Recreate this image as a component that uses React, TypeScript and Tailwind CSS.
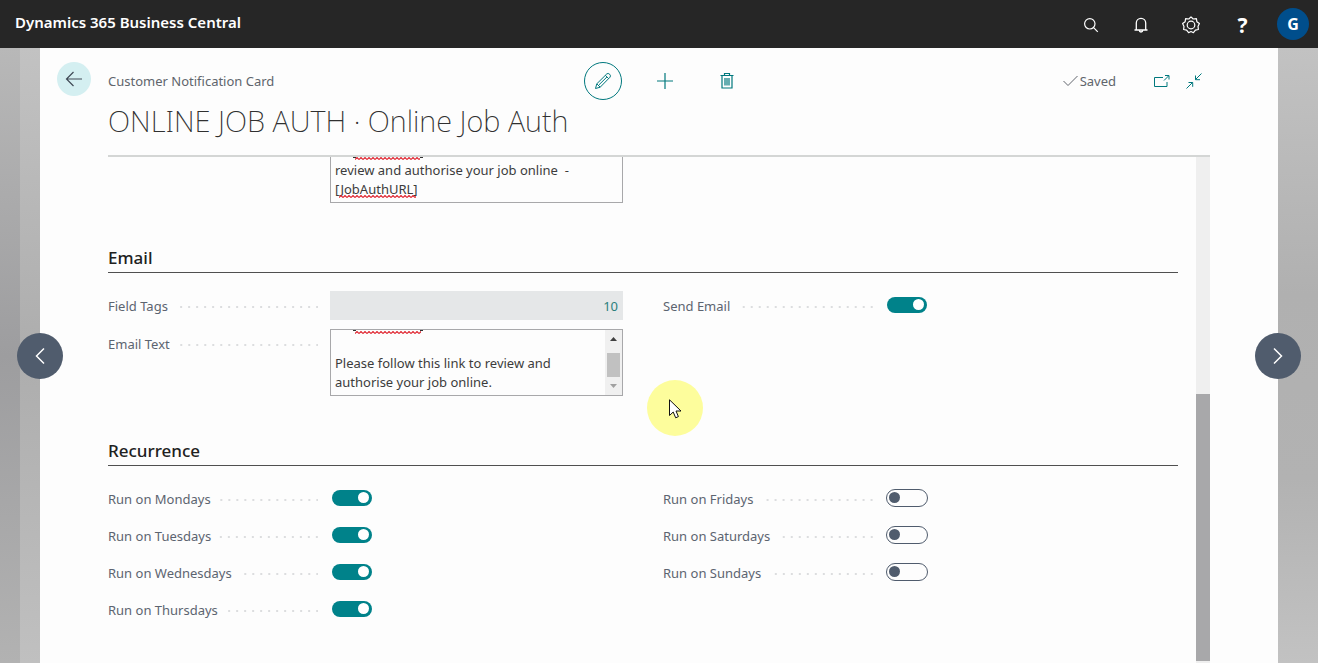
import { useId, type ReactNode } from "react";

function Toggle({ id, on }: { id: string; on: boolean }) {
  return (
    <input
      id={id}
      type="checkbox"
      role="switch"
      defaultChecked={on}
      className="mb-[2px] ml-px flex h-[18px] w-[42px] appearance-none items-center rounded-full border border-[#505c6d] bg-[#fdfdfd] bg-clip-padding px-[2px] before:block before:size-[11px] before:rounded-full before:bg-[#505c6d] checked:justify-end checked:border-transparent checked:bg-[#00828a] checked:px-[3px] checked:before:bg-white"
    />
  );
}

function Field({ label, tall, children }: { label: string; tall?: boolean; children: (id: string) => ReactNode }) {
  const id = useId();
  return (
    <div className={tall ? "flex items-start" : "flex items-center"}>
      <div className="flex h-[29px] w-[222px] shrink-0 items-center pt-[2px] pr-[12px]">
        <label htmlFor={id} className="whitespace-nowrap text-[#5c6470]">
          {label}
        </label>
        <span className="ml-2 h-[2px] flex-1 bg-[linear-gradient(to_left,#dcdddf_2px,transparent_2px)] bg-[length:8px_2px] bg-[position:right_top]" />
      </div>
      <div className="min-w-0 flex-1">{children(id)}</div>
    </div>
  );
}

function SectionTitle({ children }: { children: ReactNode }) {
  return (
    <h2 className="border-b border-[#505050] pt-[2px] text-[17px] leading-[28px] font-medium text-[#212121]">{children}</h2>
  );
}

function Squiggle({ className }: { className: string }) {
  return (
    <svg className={className} height="3" aria-hidden="true">
      <defs>
        <pattern id="wave" width="4" height="3" patternUnits="userSpaceOnUse">
          <path d="M0 2.5 L2 .5 L4 2.5" fill="none" stroke="#e0232e" strokeWidth="1.1" />
        </pattern>
      </defs>
      <rect width="100%" height="3" fill="url(#wave)" />
    </svg>
  );
}

function BracketEnds({ className }: { className: string }) {
  return (
    <svg className={className} width="72" height="2" aria-hidden="true">
      <path d="M0 .5h3M67 .5h3" stroke="#333" />
    </svg>
  );
}

const line = { fill: "none", stroke: "currentColor" };

function PageHeader() {
  return (
    <header className="flex pt-[14px]">
      <div className="w-[68px] shrink-0 pl-[17px]">
        <button aria-label="Back" className="flex size-[34px] items-center justify-center rounded-full bg-[#d4eff1] text-[#404a56]">
          <svg width="18" height="18" viewBox="0 0 18 18" {...line} strokeWidth="1.2">
            <path d="M17 9H1.5M8.500 2 1.500 9l7 7" />
          </svg>
        </button>
      </div>
      <div className="mr-[68px] flex-1 border-b-2 border-[#d4d6d5]">
        <div className="grid grid-cols-[1fr_auto_1fr] items-center">
          <span className="text-[#60656c]">Customer Notification Card</span>
          <div className="flex items-center text-[#00787d]">
            <button aria-label="Edit" className="flex size-[38px] items-center justify-center rounded-full border border-current">
              <svg width="18" height="18" viewBox="0 0 18 18" {...line}>
                <path d="M1.500 16.500 2.800 11.800 12.800 1.900Q14.200 .8 15.600 2.200 17.200 3.800 16 5.200L6.200 15.200ZM11.400 3.300 14.600 6.600M2.800 11.800 6.200 15.200M5 12.800 13 4.900" />
              </svg>
            </button>
            <button aria-label="New" className="ml-[34px] flex size-[18px] items-center justify-center">
              <svg width="18" height="18" viewBox="0 0 18 18" {...line} strokeWidth="1.2">
                <path d="M9 1v16M1 9h16" />
              </svg>
            </button>
            <button aria-label="Delete" className="ml-[45px] flex h-[18px] w-4 items-center justify-center">
              <svg width="16" height="18" viewBox="0 0 16 18" {...line} strokeWidth="1.2">
                <path d="M1.500 3.500h13M5.500 3.200V1.500h5v1.700M3 3.500v12.500h10V3.500" />
                <path d="M6 6v7.500M8 6v7.500M10 6v7.500" />
              </svg>
            </button>
          </div>
          <div className="flex items-center justify-end pr-2 text-[#00787d]">
            <span className="flex items-center gap-[2px] text-[#60656c]">
              <svg width="15" height="14" viewBox="0 0 15 14" {...line}>
                <path d="M.5 7 5 11.500 14.500 2" />
              </svg>
              Saved
            </span>
            <button aria-label="Open in new window" className="ml-[37px]">
              <svg className="block" width="17" height="16" viewBox="0 0 17 16" {...line}>
                <path d="M10 4.500H1.500v9h12.500V9M11 7.500 15.500 3M12 2.500h4v4" />
              </svg>
            </button>
            <button aria-label="Collapse" className="ml-4">
              <svg className="block" width="16" height="16" viewBox="0 0 16 16" {...line}>
                <path d="M15.500 .5 9.500 6.500M9.500 2.500v4.200h4.500M.5 15.500 6.500 9.500M2.500 9.500h4.200v4.300" />
              </svg>
            </button>
          </div>
        </div>
        <h1 className="pb-[13px] text-[29px] leading-[42px] font-extralight text-[#303030]">ONLINE JOB AUTH · Online Job Auth</h1>
      </div>
    </header>
  );
}

function Toggles({ days, on }: { days: string[]; on: boolean }) {
  return (
    <div className="flex flex-col gap-2">
      {days.map((day) => (
        <Field key={day} label={"Run on " + day}>
          {(id) => <Toggle id={id} on={on} />}
        </Field>
      ))}
    </div>
  );
}

export default function App() {
  return (
    <div className="flex h-screen flex-col overflow-hidden bg-[#b4b4b4] font-['Noto_Sans','Open_Sans',sans-serif] text-[13px] leading-[19px]">
      <nav className="flex h-12 shrink-0 items-center justify-between bg-[#262626] pr-[9px] pl-[15px] text-white">
        <a href="#" className="pb-1 text-[15px] font-semibold">
          Dynamics 365 Business Central
        </a>
        <div className="flex items-center">
          <button aria-label="Search" className="flex w-[50px] justify-center pt-[2px]">
            <svg width="16" height="16" viewBox="0 0 16 16" {...line} strokeWidth="1.2">
              <circle cx="6.800" cy="6.800" r="5.200" />
              <path d="m10.600 10.600 4.200 4.200" />
            </svg>
          </button>
          <button aria-label="Notifications" className="flex w-[50px] justify-center pt-[2px]">
            <svg width="16" height="18" viewBox="0 0 16 18" {...line} strokeWidth="1.300">
              <path d="M1.500 14h13M3.300 14V7a4.700 4.700 0 0 1 9.400 0v7M6.300 14.300a1.700 1.700 0 0 0 3.400 0" />
            </svg>
          </button>
          <button aria-label="Settings" className="flex w-[50px] justify-center pt-[2px]">
            <svg width="18" height="18" viewBox="0 0 18 18" {...line} strokeWidth="1.200">
              <circle cx="9" cy="9" r="3.800" />
              <path strokeLinejoin="round" d="M9 .8 11.200 3 14.400 2.700 14.900 5.800 17.400 7.600 16 10.400 16.400 13.500 13.400 14.200 11.400 16.700 9 15.500 6.600 16.700 4.600 14.200 1.600 13.500 2 10.400 .6 7.600 3.100 5.800 3.600 2.700 6.800 3Z" />
            </svg>
          </button>
          <button aria-label="Help" className="flex w-[53px] justify-center pt-[2px] text-[21px] leading-6 font-bold">
            ?
          </button>
          <button aria-label="Account" className="ml-2 flex size-8 items-center justify-center rounded-full bg-[#004e8c] text-[16px] font-bold">
            G
          </button>
        </div>
      </nav>

      <div className="relative flex min-h-0 flex-1">
        <div className="w-5 shrink-0 bg-linear-to-b from-[#b8b8b8] via-[#9d9d9f] to-[#b2b2b2]" />
        <div className="w-5 shrink-0 bg-linear-to-b from-[#c2c2c2] via-[#adadad] to-[#c0c0c0]" />
        <main className="flex min-w-0 flex-1 flex-col bg-[#fdfdfd]">
          <PageHeader />
          <div className="mr-[68px] ml-[68px] flex min-h-0 flex-1">
            <div className="mr-[18px] min-w-0 flex-1 overflow-hidden">
              <div className="grid grid-cols-2 gap-x-10">
                <div className="relative ml-[222px]">
                  <textarea
                    aria-label="SMS Text"
                    spellCheck={false}
                    className="block h-[46px] w-full resize-none overflow-hidden border border-t-0 border-[#a8a8aa] bg-transparent px-1 pt-1 text-[#3c3c3c]"
                    defaultValue={"review and authorise your job online  -\n[JobAuthURL]"}
                  />
                  <BracketEnds className="absolute top-0 left-[23px]" />
                  <Squiggle className="absolute top-0 left-[25px] w-[65px]" />
                  <Squiggle className="absolute top-[38px] left-[9px] w-[77px]" />
                </div>
              </div>

              <section className="mt-[39px]">
                <SectionTitle>Email</SectionTitle>
                <div className="mt-[18px] grid grid-cols-2 gap-x-10">
                  <div className="flex flex-col gap-[9px]">
                    <Field label="Field Tags">
                      {(id) => (
                        <input
                          id={id}
                          readOnly
                          defaultValue="10"
                          className="block h-[29px] w-full bg-[#e5e7e8] px-[5px] text-right text-[#2b7f7c]"
                        />
                      )}
                    </Field>
                    <Field label="Email Text" tall>
                      {(id) => (
                        <div className="relative flex h-[67px] border border-[#a8a8aa]">
                          <textarea
                            id={id}
                            spellCheck={false}
                            className="min-w-0 flex-1 resize-none overflow-hidden bg-transparent px-1 pt-[5px] text-[#3c3c3c]"
                            defaultValue={"\nPlease follow this link to review and authorise your job online."}
                          />
                          <BracketEnds className="absolute top-0 left-[22px]" />
                          <Squiggle className="absolute top-[1px] left-[24px] w-[66px]" />
                          <div className="flex w-[17px] flex-col items-center bg-[#f0f0f0] pt-[7px] pb-[7px]">
                            <svg width="7" height="4" aria-hidden="true">
                              <path d="M0 4 3.500 0 7 4Z" fill="#404040" />
                            </svg>
                            <span className="mt-3 mb-[7px] w-[13px] flex-1 bg-[#c1c1c1]" />
                            <svg width="7" height="4" aria-hidden="true">
                              <path d="M0 0 3.500 4 7 0Z" fill="#a0a0a0" />
                            </svg>
                          </div>
                        </div>
                      )}
                    </Field>
                  </div>
                  <div>
                    <Field label="Send Email">{(id) => <Toggle id={id} on />}</Field>
                  </div>
                </div>
              </section>

              <section className="mt-[39px]">
                <SectionTitle>Recurrence</SectionTitle>
                <div className="mt-[18px] grid grid-cols-2 gap-x-10">
                  <Toggles days={["Mondays", "Tuesdays", "Wednesdays", "Thursdays"]} on />
                  <Toggles days={["Fridays", "Saturdays", "Sundays"]} on={false} />
                </div>
              </section>
            </div>
            <div className="flex w-[14px] flex-col justify-end bg-[#efefef] pb-[2px]">
              <span className="h-[53%] bg-[#a8a8aa]" />
            </div>
          </div>
        </main>
        <div className="w-10 shrink-0 bg-[linear-gradient(to_bottom,#c2c2c2,#b0b0b0_40%,#b2b2b2_70%,#c2c2c2)]" />

        <button aria-label="Previous" className="absolute top-1/2 left-[17px] flex size-[46px] -translate-y-1/2 items-center justify-center rounded-full bg-[#505c6d] text-white">
          <svg width="10" height="18" viewBox="0 0 10 18" {...line} strokeWidth="1.500">
            <path d="M9 1.500 1.500 9 9 16.500" />
          </svg>
        </button>
        <button aria-label="Next" className="absolute top-1/2 right-[17px] flex size-[46px] -translate-y-1/2 items-center justify-center rounded-full bg-[#505c6d] text-white">
          <svg width="10" height="18" viewBox="0 0 10 18" {...line} strokeWidth="1.500">
            <path d="M1 1.500 8.500 9 1 16.500" />
          </svg>
        </button>
        <div className="pointer-events-none absolute top-[332px] left-[647px] flex size-14 rounded-full bg-[#fdfd9c] pt-[19px] pl-[22px]">
          <svg width="13" height="20" viewBox="0 0 13 20" aria-hidden="true">
            <path d="M.5 .8V16.500L4.200 13 6.700 18.800 9.400 17.600 7 12H12Z" fill="#fff" stroke="#111" />
          </svg>
        </div>
      </div>
    </div>
  );
}
